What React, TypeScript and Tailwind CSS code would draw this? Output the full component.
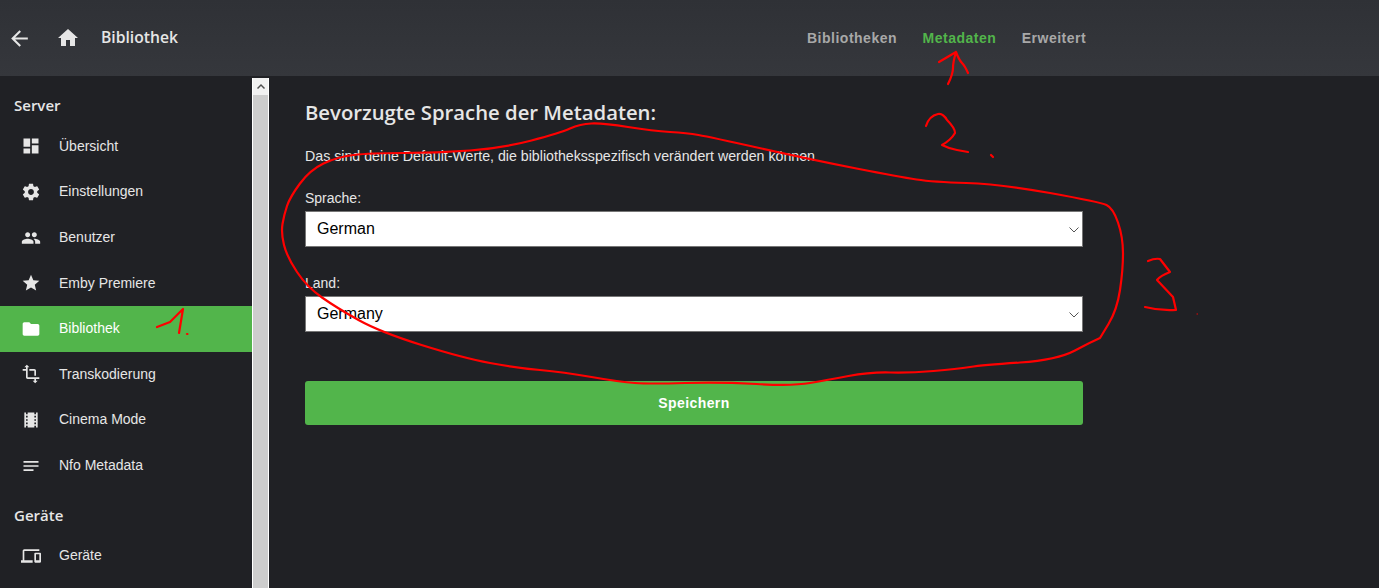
const icons = {
  dashboard: 'M3 13h8V3H3v10zm0 8h8v-6H3v6zm10 0h8V11h-8v10zm0-18v6h8V3h-8z',
  settings:
    'M19.43 12.98c.04-.32.07-.64.07-.98s-.03-.66-.07-.98l2.11-1.65c.19-.15.24-.42.12-.64l-2-3.46c-.12-.22-.39-.3-.61-.22l-2.49 1c-.52-.4-1.08-.73-1.69-.98l-.38-2.65C14.46 2.18 14.25 2 14 2h-4c-.25 0-.46.18-.49.42l-.38 2.65c-.61.25-1.17.59-1.69.98l-2.49-1c-.23-.09-.49 0-.61.22l-2 3.46c-.13.22-.07.49.12.64l2.11 1.65c-.04.32-.07.65-.07.98s.03.66.07.98l-2.11 1.65c-.19.15-.24.42-.12.64l2 3.46c.12.22.39.3.61.22l2.49-1c.52.4 1.08.73 1.69.98l.38 2.65c.03.24.24.42.49.42h4c.25 0 .46-.18.49-.42l.38-2.65c.61-.25 1.17-.59 1.69-.98l2.49 1c.23.09.49 0 .61-.22l2-3.46c.12-.22.07-.49-.12-.64l-2.11-1.65zM12 15.5c-1.93 0-3.5-1.57-3.5-3.5s1.57-3.5 3.5-3.5 3.5 1.57 3.5 3.5-1.57 3.5-3.5 3.5z',
  people:
    'M16 11c1.66 0 2.99-1.34 2.99-3S17.66 5 16 5c-1.66 0-3 1.34-3 3s1.34 3 3 3zm-8 0c1.66 0 2.99-1.34 2.99-3S9.66 5 8 5C6.34 5 5 6.34 5 8s1.34 3 3 3zm0 2c-2.33 0-7 1.17-7 3.5V19h14v-2.5c0-2.33-4.67-3.5-7-3.5zm8 0c-.29 0-.62.02-.97.05 1.16.84 1.97 1.97 1.97 3.45V19h6v-2.5c0-2.33-4.67-3.5-7-3.5z',
  star: 'M12 17.27L18.18 21l-1.64-7.03L22 9.24l-7.19-.61L12 2 9.19 8.63 2 9.24l5.46 4.73L5.82 21z',
  folder: 'M10 4H4c-1.1 0-1.99.9-1.99 2L2 18c0 1.1.9 2 2 2h16c1.1 0 2-.9 2-2V8c0-1.1-.9-2-2-2h-8l-2-2z',
  transform: 'M22 18v-2H8V4h2L7 1 4 4h2v2H2v2h4v8c0 1.1.9 2 2 2h8v2h-2l3 3 3-3h-2v-2h4zM10 8h6v6h2V8c0-1.1-.9-2-2-2h-6v2z',
  movie:
    'M18 3v2h-2V3H8v2H6V3H4v18h2v-2h2v2h8v-2h2v2h2V3h-2zM8 17H6v-2h2v2zm0-4H6v-2h2v2zm0-4H6V7h2v2zm10 8h-2v-2h2v2zm0-4h-2v-2h2v2zm0-4h-2V7h2v2z',
  notes: 'M3 18h12v-2H3v2zM3 6v2h18V6H3zm0 7h18v-2H3v2z',
  devices:
    'M4 6h18V4H4c-1.1 0-2 .9-2 2v11H0v3h14v-3H4V6zm19 2h-6c-.55 0-1 .45-1 1v10c0 .55.45 1 1 1h6c.55 0 1-.45 1-1V9c0-.55-.45-1-1-1zm-1 9h-4v-7h4v7z',
  home: 'M10 20v-6h4v6h5v-8h3L12 3 2 12h3v8z',
  back: 'M20 11H7.83l5.59-5.59L12 4l-8 8 8 8 1.41-1.41L7.83 13H20v-2z',
};

function Icon({ d, className }: { d: string; className: string }) {
  return (
    <svg viewBox="0 0 24 24" fill="currentColor" className={className}>
      <path d={d} />
    </svg>
  );
}

function NavItem({ icon, label, active }: { icon: string; label: string; active?: boolean }) {
  return (
    <div className={`flex h-[45.6px] items-center pl-[21px] text-[14px] ${active ? 'bg-[#52b54b] text-white' : 'text-[#e6e6e6]'}`}>
      <Icon d={icon} className="h-5 w-5 shrink-0" />
      <span className="ml-[18px]">{label}</span>
    </div>
  );
}

function SelectField({ label, value, className }: { label: string; value: string; className: string }) {
  return (
    <div className={className}>
      <label className="block text-[14px] leading-[16px] text-[#e6e6e6]">{label}</label>
      <div className="relative mt-[5px]">
        <select
          defaultValue={value}
          className="block h-[36px] w-full appearance-none rounded-none border border-[#767676] bg-white pl-[11px] text-[16px] text-black outline-none"
        >
          <option>{value}</option>
        </select>
        <svg viewBox="0 0 10 6" className="pointer-events-none absolute right-[4px] top-[16px] h-[6px] w-[10px]" fill="none" stroke="#555" strokeWidth="1">
          <path d="M.5.5 5 5 9.500.5" />
        </svg>
      </div>
    </div>
  );
}

// die roten Markierungen aus dem Screenshot
const loop: [number, number][] = [
  [1100, 338], [1093, 341], [1057, 360], [983, 365], [957, 369], [910, 373], [870, 372], [827, 380], [793, 386],
  [720, 382], [650, 384], [620, 382], [563, 372], [517, 368], [463, 358], [380, 332], [337, 308], [307, 287],
  [287, 257], [281, 233], [284, 215], [290, 197], [310, 170], [337, 157], [370, 153], [437, 153], [503, 148],
  [560, 133], [580, 124], [603, 123], [653, 131], [687, 133], [710, 137], [813, 160], [900, 177], [933, 182],
  [1000, 184], [1100, 202], [1113, 208], [1123, 237], [1123, 270], [1117, 310], [1100, 338],
];

function smooth(points: [number, number][]) {
  let d = `M${points[0][0]} ${points[0][1]}`;
  for (let i = 1; i < points.length - 1; i++) {
    const mx = (points[i][0] + points[i + 1][0]) / 2;
    const my = (points[i][1] + points[i + 1][1]) / 2;
    d += `Q${points[i][0]} ${points[i][1]} ${mx} ${my}`;
  }
  const last = points[points.length - 1];
  return d + `L${last[0]} ${last[1]}`;
}

function Annotations() {
  return (
    <svg className="pointer-events-none absolute inset-0 h-full w-full" viewBox="0 0 1379 588" fill="none" stroke="#f00" strokeWidth="2.2" strokeLinecap="round" strokeLinejoin="round">
      <path d={smooth(loop)} />
      <path d="M157 327 170 322 183 309 179 333" />
      <path d="M187 334h.5" />
      <path d="M948 84Q953 74 953 68T956 52M939 62 956 52Q959 60 962 63T968 73" />
      <path d="M926 126Q929 116 938 114 943 113 947 120 955 128 955 133 951 140 942 145 950 149 957 150L968 152" />
      <path d="M991 155l2 2" />
      <path d="M1148 261Q1155 258 1160 259L1170 272Q1160 276 1157 280L1173 297 1176 310Q1160 311 1145 307" />
      <path d="M1197 314h.5" strokeWidth="1" />
    </svg>
  );
}

export default function App() {
  return (
    <div className="relative flex h-screen flex-col overflow-hidden bg-[#202125] font-['Liberation_Sans',sans-serif]">
      <header className="flex h-[76px] shrink-0 items-center bg-gradient-to-b from-[#2f3136] to-[#35373c] text-[#e6e6e6]">
        <Icon d={icons.back} className="ml-[7px] h-[25px] w-[25px]" />
        <Icon d={icons.home} className="ml-[24px] h-6 w-6" />
        <span className="ml-[21px] font-['Open_Sans',sans-serif] text-[15.7px] font-semibold">Bibliothek</span>
        <nav className="ml-[629px] flex gap-[25.5px] text-[14px] font-bold tracking-[0.5px] text-[#a8a8a8]">
          <span>Bibliotheken</span>
          <span className="text-[#52b54b]">Metadaten</span>
          <span>Erweitert</span>
        </nav>
      </header>

      <div className="flex min-h-0 flex-1">
        <aside className="w-[252px] shrink-0">
          <h3 className="pb-[8.6px] pl-[14px] pt-[19px] font-['Open_Sans',sans-serif] text-[15px] font-semibold leading-[20px] text-[#e6e6e6]">Server</h3>
          <NavItem icon={icons.dashboard} label="Übersicht" />
          <NavItem icon={icons.settings} label="Einstellungen" />
          <NavItem icon={icons.people} label="Benutzer" />
          <NavItem icon={icons.star} label="Emby Premiere" />
          <NavItem icon={icons.folder} label="Bibliothek" active />
          <NavItem icon={icons.transform} label="Transkodierung" />
          <NavItem icon={icons.movie} label="Cinema Mode" />
          <NavItem icon={icons.notes} label="Nfo Metadata" />
          <h3 className="pb-[7.4px] pl-[14px] pt-[17px] font-['Open_Sans',sans-serif] text-[15px] font-semibold leading-[20px] text-[#e6e6e6]">Geräte</h3>
          <NavItem icon={icons.devices} label="Geräte" />
        </aside>

        {/* Scrollbar */}
        <div className="mt-[2px] flex w-[17px] shrink-0 flex-col border-x border-white bg-[#cdcdcd]">
          <div className="flex h-[17px] items-center justify-center bg-[#f1f1f1]">
            <svg viewBox="0 0 8 5" className="h-[5px] w-[8px]" fill="#505050">
              <path d="M4 0 8 4 7 5 4 2 1 5 0 4z" />
            </svg>
          </div>
        </div>

        <main className="pl-[36px]">
          <div className="w-[778px]">
            <h1 className="pt-[22px] font-['Open_Sans',sans-serif] text-[20.3px] font-semibold leading-[28px] text-[#e6e6e6]">
              Bevorzugte Sprache der Metadaten:
            </h1>
            <p className="mt-[22px] text-[14.2px] leading-[16px] text-[#e6e6e6]">
              Das sind deine Default-Werte, die bibliotheksspezifisch verändert werden können
            </p>
            <SelectField label="Sprache:" value="German" className="mt-[26px]" />
            <SelectField label="Land:" value="Germany" className="mt-[28px]" />
            <button className="mt-[49px] block h-[44px] w-full rounded-[3px] bg-[#52b54b] pt-[1px] text-[14px] font-bold tracking-[0.4px] text-white">
              Speichern
            </button>
          </div>
        </main>
      </div>

      <Annotations />
    </div>
  );
}
